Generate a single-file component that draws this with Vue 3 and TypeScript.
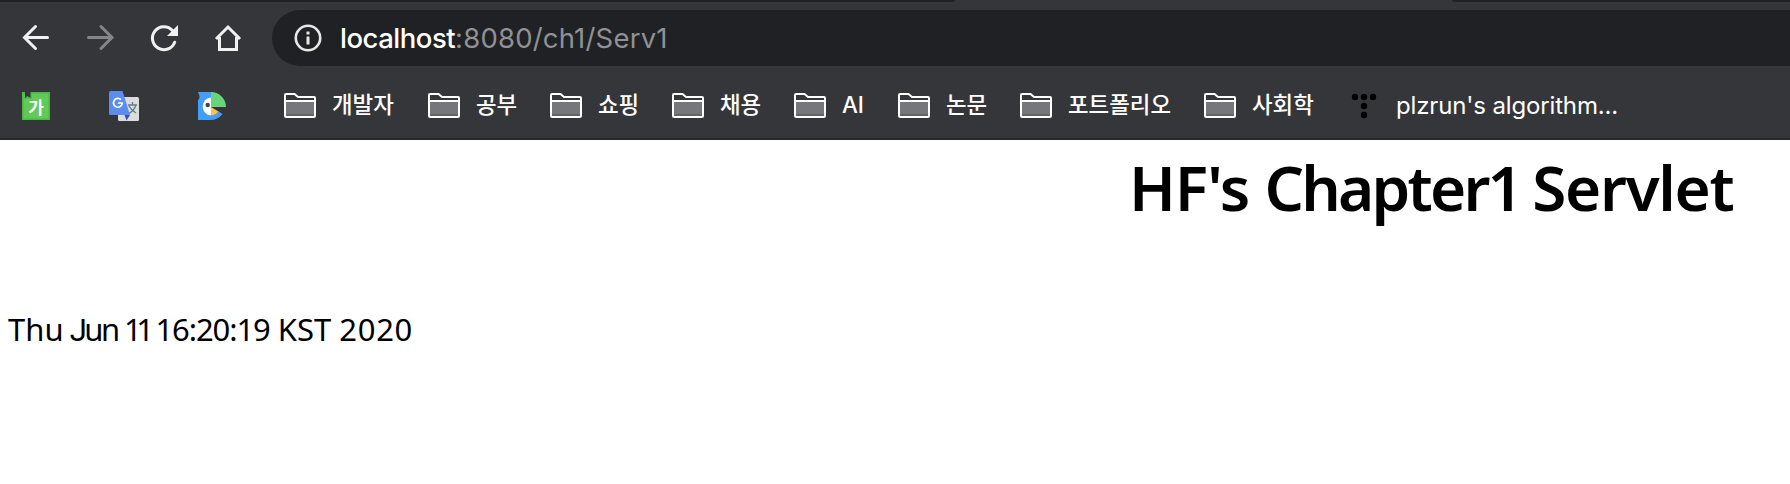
<script setup lang="ts">
interface Folder {
  label: string
  width: number
}

const folders: Folder[] = [
  { label: '개발자', width: 96 },
  { label: '공부', width: 74 },
  { label: '쇼핑', width: 74 },
  { label: '채용', width: 74 },
  { label: 'AI', width: 56 },
  { label: '논문', width: 74 },
  { label: '포트폴리오', width: 136 },
  { label: '사회학', width: 96 },
]
</script>

<template>
  <div class="window">
    <header class="chrome">
      <div class="tabs"><i class="tab before"></i><i class="tab after"></i></div>
      <div class="toolbar">
        <svg class="nav" viewBox="0 0 32 32"><path d="M27.500 15.500H4.500M15.500 4.500L4.500 15.500 15.500 26.500" /></svg>
        <svg class="nav dim" viewBox="0 0 32 32"><path d="M4.500 15.500H27.500M17 4.500L28 15.500 17 26.500" /></svg>
        <svg class="nav" viewBox="0 0 32 32">
          <path d="M26.700 20.200A11.500 11.500 0 1 1 24.500 8.500" />
          <path class="solid" d="M30 3V14H19Z" />
        </svg>
        <svg class="nav" viewBox="0 0 32 32"><path class="house" d="M4 17L16 5 28 17M7.500 15V27.500H24.500V15" /></svg>
        <div class="address">
          <svg class="info" viewBox="0 0 28 28">
            <circle cx="14" cy="14" r="12.200" />
            <path d="M12.500 7.500h3v3h-3zM12.500 12.500h3v8h-3z" />
          </svg>
          <span class="url"><b>localhost</b>:8080/ch1/Serv1</span>
        </div>
      </div>
      <nav class="bookmarks">
        <div class="dict">
          <svg viewBox="0 0 28 28">
            <path fill="#4bb844" d="M0 0H3V6L5.500 4 8.500 6V0H28V28H0Z" />
            <path fill="#5fca55" d="M1.500 1.500H2.500V7.500L5.500 6 9.500 7.500V1.500H26.500V26.500H1.500Z" />
          </svg>
          <span>가</span>
        </div>
        <svg class="translate" viewBox="0 0 30 30">
          <rect x="9" y="6" width="21" height="24" rx="1.500" fill="#dcdcdc" />
          <path d="M19 14H28M23.500 11V14M27 14Q25 20 19 23M20 15Q22 19 27 22" stroke="#607d88" stroke-width="1.300" fill="none" />
          <path d="M15.500 24H21L17.500 29.500Z" fill="#3c50b5" />
          <path d="M1.500 0H13.500L21 24H1.500Q0 24 0 22.500V1.500Q0 0 1.500 0Z" fill="#5b8df0" />
          <path d="M12 8.700A4.400 4.400 0 1 0 13.300 12H9" stroke="#fff" stroke-width="1.700" fill="none" />
        </svg>
        <svg class="bird" viewBox="0 0 28 28">
          <path fill="#429ef7" d="M0 0H13V23.500Q18 23 20.300 19.300L24.500 22Q20 28 12 28H0V8Q3 6 0 0Z" />
          <path fill="#fff" d="M13 5.500A8.300 9 0 0 0 13 23.500Z" />
          <path fill="#f7c24f" d="M13 15L20.500 19.500Q17.500 23.500 13 23.500Z" />
          <path fill="#67d67b" d="M13 0A15 15 0 0 1 28 15H13Z" />
          <circle cx="9.700" cy="13" r="2.200" fill="#3c4650" />
        </svg>
        <div v-for="folder in folders" :key="folder.label" class="folder">
          <svg viewBox="0 0 32 25">
            <path d="M2 8H30V23H2Z" fill="#76777a" />
            <path d="M2 21H30V23H2Z" fill="#636467" />
            <path d="M1 23V2Q1 1 2 1H10.500L14 4H30Q31 4 31 5V23Q31 24 30 24H2Q1 24 1 23ZM1 8H31" fill="none" stroke="#fff" stroke-width="2" />
          </svg>
          <span class="label" :style="{ width: folder.width + 'px' }">{{ folder.label }}</span>
        </div>
        <svg class="dots" viewBox="0 0 26 26">
          <circle cx="4" cy="4" r="3.200" /><circle cx="13" cy="4" r="3.200" /><circle cx="22" cy="4" r="3.200" />
          <circle cx="13" cy="13" r="3.200" /><circle cx="13" cy="22" r="3.200" />
        </svg>
        <span class="blog">plzrun's algorithm...</span>
      </nav>
    </header>
    <main class="page">
      <h1>HF's <span class="chapter">Chapter1</span> <span class="servlet">Servlet</span></h1>
      <p>Thu <span class="month"><span class="cap">J</span>un</span> <span class="day">11</span> <span class="time">16:20:19</span> KST <span class="year">2020</span></p>
    </main>
  </div>
</template>

<style>
body {
  margin: 0;
  background: #fff;
  overflow: hidden;
}
</style>

<style scoped>
.window {
  width: 1790px;
  height: 484px;
  overflow: hidden;
  background: #fff;
}
.chrome {
  box-sizing: border-box;
  height: 140px;
  background: #35363a;
  border-bottom: 2px solid #28292b;
}
.tabs {
  display: flex;
  justify-content: space-between;
  height: 2px;
}
.tab {
  background: #202124;
}
.before {
  width: 955px;
  border-bottom-right-radius: 4px 2px;
}
.after {
  width: 338px;
  border-bottom-left-radius: 4px 2px;
}
.toolbar {
  display: flex;
  align-items: center;
  height: 72px;
  padding-left: 20px;
}
.nav {
  flex: none;
  width: 32px;
  height: 32px;
  margin-right: 32px;
  fill: none;
  stroke: #f1f1f2;
  stroke-width: 3;
  stroke-linecap: round;
}
.nav .solid {
  fill: #f1f1f2;
  stroke: none;
}
.nav .house {
  stroke-linecap: butt;
}
.dim {
  stroke: #85868a;
}
.address {
  display: flex;
  flex: 1;
  align-items: center;
  height: 56px;
  margin-left: -4px;
  padding-left: 22px;
  border-radius: 28px 0 0 28px;
  background: #202124;
}
.info {
  width: 28px;
  height: 28px;
  margin-right: 18px;
  fill: #e8e8e8;
}
.info circle {
  fill: none;
  stroke: #e8e8e8;
  stroke-width: 2.6;
}
.url {
  color: #8f9194;
  font: 400 27.5px/56px Inter, "Liberation Sans", sans-serif;
  letter-spacing: 0.2px;
}
.url b {
  color: #fff;
  font-weight: 450;
  letter-spacing: -0.5px;
}
.bookmarks {
  display: flex;
  align-items: center;
  height: 64px;
  padding-left: 22px;
  color: #fff;
  font: 500 22.4px/32px Inter, "Noto Sans CJK KR", sans-serif;
  white-space: nowrap;
}
.dict {
  display: grid;
  width: 28px;
  height: 28px;
  margin-right: 59px;
}
.dict svg,
.dict span {
  grid-area: 1 / 1;
  width: 28px;
  height: 28px;
}
.dict span {
  font: 700 17px/29px "Noto Sans CJK KR", sans-serif;
  text-align: center;
}
.translate {
  width: 30px;
  height: 30px;
  margin-right: 59px;
}
.bird {
  width: 28px;
  height: 28px;
  margin-right: 58px;
}
.folder {
  display: flex;
  align-items: center;
}
.folder svg {
  width: 32px;
  height: 25px;
  margin-right: 16px;
  margin-bottom: 1px;
}
.label {
  margin-bottom: 2px;
}
.dots {
  width: 26px;
  height: 26px;
  margin-left: 3px;
  margin-right: 19px;
}
.blog {
  font-size: 24px;
  font-weight: 400;
  letter-spacing: -0.15px;
}
.page {
  padding: 0 8px;
  color: #000;
  font-family: "Noto Sans", "Open Sans", sans-serif;
}
h1 {
  margin: 0;
  padding-left: 1121px;
  font-size: 62px;
  font-weight: 600;
  line-height: 95px;
  letter-spacing: -1px;
  white-space: nowrap;
}
.chapter {
  letter-spacing: -2.8px;
}
.servlet {
  margin-left: -3px;
  letter-spacing: -1.3px;
}
p {
  margin: 70px 0 0;
  font-size: 31px;
  line-height: 48px;
}
.month {
  margin-left: -2px;
  letter-spacing: -2.4px;
}
.cap {
  font-family: Roboto, sans-serif;
}
.day {
  margin-left: -2px;
  letter-spacing: -5.5px;
}
.time {
  margin-left: -1px;
  letter-spacing: -1.1px;
}
.year {
  letter-spacing: 0.7px;
}
</style>
